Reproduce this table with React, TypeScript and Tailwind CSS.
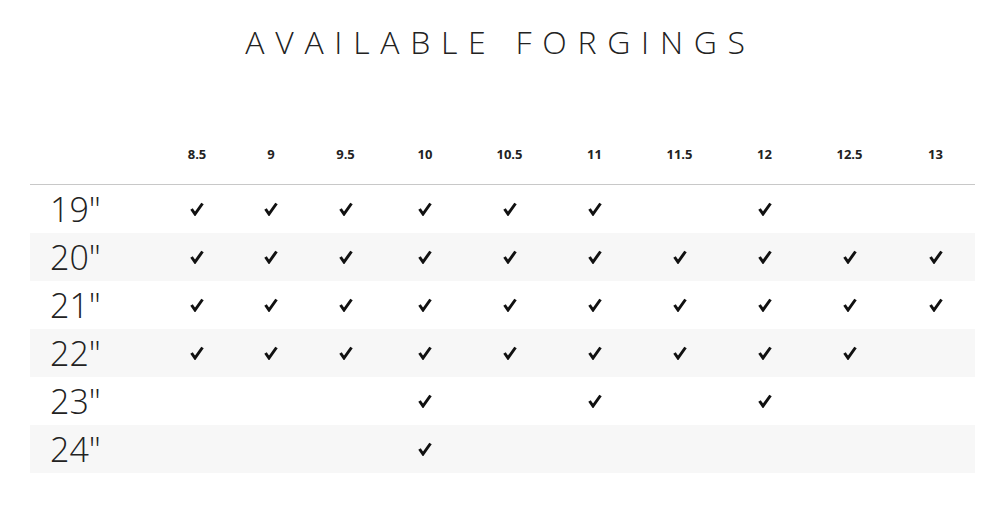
import React from 'react';

const sizes = ['8.5', '9', '9.5', '10', '10.5', '11', '11.5', '12', '12.5', '13'];

const rows = [
  { label: '19"', has: ['8.5', '9', '9.5', '10', '10.5', '11', '12'] },
  { label: '20"', has: sizes },
  { label: '21"', has: sizes },
  { label: '22"', has: ['8.5', '9', '9.5', '10', '10.5', '11', '11.5', '12', '12.5'] },
  { label: '23"', has: ['10', '11', '12'] },
  { label: '24"', has: ['10'] },
];

const cols = 'grid grid-cols-[130px_74px_74px_75px_84px_85px_85px_85px_85px_85px_83px]';

const Check = () => (
  <svg width="14" height="14" viewBox="0 0 14 14" className="block">
    <polyline points="1.5,7 5,12 12.5,1.5" fill="none" stroke="#111" strokeWidth="3" strokeLinecap="butt" strokeLinejoin="miter" />
  </svg>
);

const App = () => {
  return (
    <div className="w-[1001px] h-[507px] bg-white text-[#222]" style={{ fontFamily: '"Open Sans", "Liberation Sans", sans-serif' }}>
      <h1 className="pt-[20px] h-[130px] text-center text-[32px] leading-[44px] font-light tracking-[0.335em]">
        AVAILABLE FORGINGS
      </h1>
      <div className="mx-[30px] w-[945px]">
        <div className={`${cols} h-[55px] items-center border-b border-[#c8c8c8] text-[13px] font-bold`}>
          <div />
          {sizes.map((s, i) => (
            <div key={s} className={`text-center pb-[5px] ${i === sizes.length - 1 ? 'pl-[4px]' : ''}`}>{s}</div>
          ))}
        </div>
        {rows.map((r, i) => (
          <div key={r.label} className={`${cols} h-[48px] items-center ${i % 2 === 1 ? 'bg-[#f7f7f7]' : 'bg-white'}`}>
            <div className="pl-[20px] text-[34px] font-light leading-none">{r.label}</div>
            {sizes.map((s, j) => (
              <div key={s} className={`flex justify-center ${j === sizes.length - 1 ? 'pl-[4px]' : ''}`}>
                {r.has.includes(s) ? <Check /> : null}
              </div>
            ))}
          </div>
        ))}
      </div>
    </div>
  );
};

export default App;
